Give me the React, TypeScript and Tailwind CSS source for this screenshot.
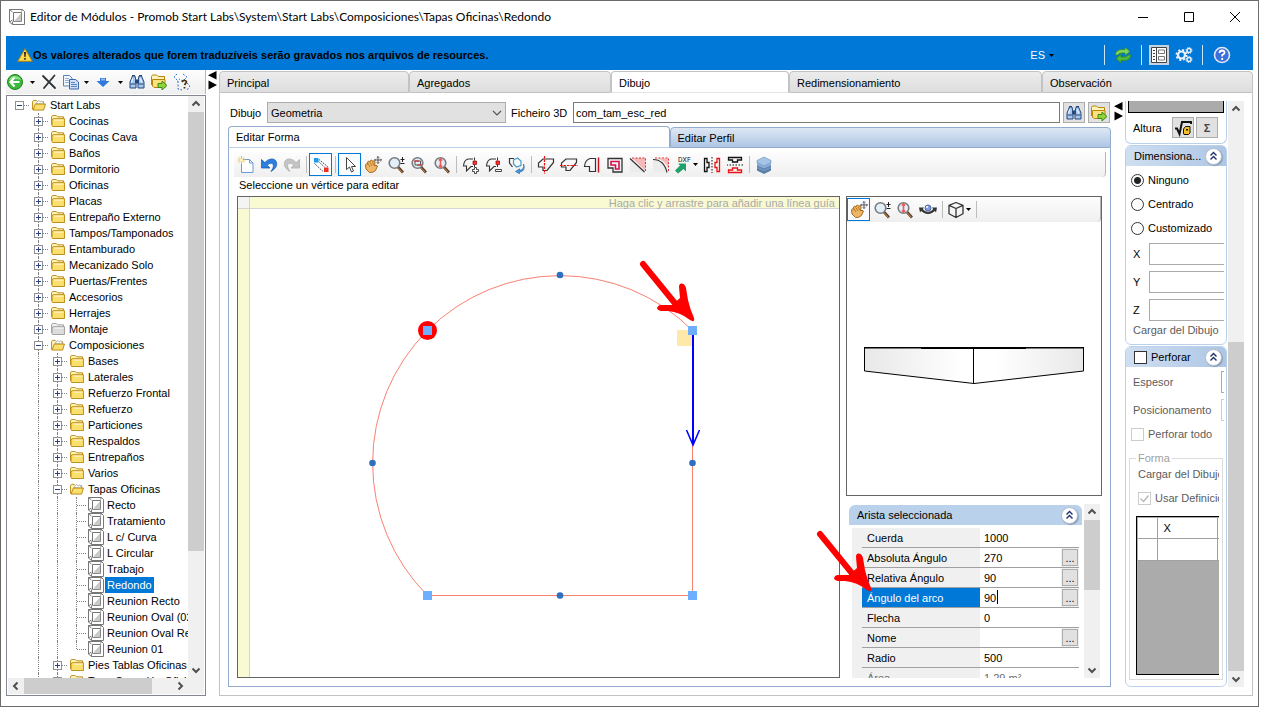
import { useState } from 'react';
import type { ReactNode } from 'react';
import clsx from 'clsx';

/* ---------- icons ---------- */

interface IconProps {
  size?: number;
  children: ReactNode;
}

function Icon({ size = 18, children }: IconProps) {
  return (
    <svg width={size} height={size} viewBox="0 0 18 18" fill="none" aria-hidden="true" className="shrink-0">
      {children}
    </svg>
  );
}

function Caret() {
  return (
    <svg width="5" height="3" viewBox="0 0 5 3" aria-hidden="true" className="shrink-0">
      <path d="M0 0h5L2.500 3z" fill="#000" />
    </svg>
  );
}

function ModuleIcon({ size = 16 }: { size?: number }) {
  return (
    <svg width={size} height={size} viewBox="0 0 16 16" fill="#fff" aria-hidden="true" className="shrink-0">
      <path d="M.5 .5h13l2 2v13h-12l-3-2.500z" stroke="#777" />
      <path d="M.5 .5l3 2.500M13.500 .5l-1 2M.5 13l3-2M3.500 15.500v-3" stroke="#777" />
      <path d="M4.500 3.500h8v9h-8z" stroke="#777" />
      <path d="M5 12.200L12.200 4v8.200z" fill="#c9c9c9" />
    </svg>
  );
}

function FolderIcon({ open, gray }: { open?: boolean; gray?: boolean }) {
  const edge = gray ? '#9a9a9a' : '#b8860b';
  const body = gray ? '#dcdcdc' : '#fbdf6e';
  return (
    <svg width="14" height="12" viewBox="0 0 15 13" fill="none" aria-hidden="true" className="shrink-0">
      {open ? (
        <>
          <path d="M.5 11.500V3l1-1.500h3L6 3h6.500v3" fill="#fff3b8" stroke={edge} />
          <path d="M4 5l3-3.500L9 3l1.500-1L13 5.500z" fill="#fff" stroke="#8fa6bd" strokeWidth=".8" />
          <path d="M1 12l2.500-6.500h11L12.500 12z" fill={body} stroke={edge} />
        </>
      ) : (
        <>
          <path d="M.5 10.500V2l1-1.500h4L7 2h6.500v2" fill={gray ? '#f2f2f2' : '#fff3b8'} stroke={edge} />
          <path d="M1.500 12.500l-.5-1V5l1.500-1h12v8.500z" fill={body} stroke={edge} />
          <path d="M3.500 5.500h10" stroke={gray ? '#fff' : '#fffbe0'} />
        </>
      )}
    </svg>
  );
}

function FolderGoIcon() {
  return (
    <Icon>
      <path d="M1.500 12V3.500L2.500 2h4L8 3.500h6.500V6" fill="#fff3b8" stroke="#b8860b" />
      <path d="M4 14.500L2.500 13V6.500h12.500v8z" fill="#fbe27d" stroke="#b8860b" />
      <path d="M8 10.500h4V8l5 4.500-5 4.500v-2.500H8z" fill="#8fd43c" stroke="#3f8a16" />
    </Icon>
  );
}

function BinocularsIcon() {
  return (
    <Icon>
      <path d="M2 15V9l2.500-6h2.500l1 5v7z" fill="#a9c6ec" stroke="#24497e" />
      <path d="M16 15V9l-2.500-6H11l-1 5v7z" fill="#a9c6ec" stroke="#24497e" />
      <path d="M7.500 7h3v3h-3zM4 2.500h3M11 2.500h3" fill="#24497e" stroke="#24497e" />
      <path d="M2.500 11h5M10.500 11h5" stroke="#24497e" />
      <path d="M3.500 9.500l1-4M12.500 5.500l1 4" stroke="#fff" />
    </Icon>
  );
}

function BackIcon() {
  return (
    <Icon>
      <circle cx="9" cy="9" r="7.500" fill="#3db83d" stroke="#1d861d" />
      <path d="M3 7a6.500 6.500 0 0112 0q-6-2-12 0" fill="#8be08b" />
      <path d="M8.500 4.500L4.500 9l4 4.500M5 9h8.500" stroke="#fff" strokeWidth="2.200" />
    </Icon>
  );
}

function DeleteIcon() {
  return (
    <Icon>
      <path d="M3 3l12 12M14.500 2.500L4 15" stroke="#2e3338" strokeWidth="1.800" strokeLinecap="round" />
    </Icon>
  );
}

function CopyIcon() {
  return (
    <Icon>
      <path d="M1.500 2.500h6l2.500 2.500v8H1.500z" fill="#f3f8ff" stroke="#5b83bd" />
      <path d="M3 5.500h4M3 7.500h4M3 9.500h4" stroke="#8fb1de" />
      <path d="M7.500 6.500h6L16.500 9v7h-9z" fill="#cfe0f8" stroke="#3c68ab" />
      <path d="M9 9.500h4M9 11.500h6M9 13.500h6" stroke="#5b83bd" />
    </Icon>
  );
}

function DownIcon() {
  return (
    <Icon>
      <path d="M6 5h6v3h3.500L9 14 2.500 8H6z" fill="#2f78dd" />
      <path d="M7 5.500h4v2H7z" fill="#8fbaf2" />
    </Icon>
  );
}

function SearchTreeIcon() {
  return (
    <Icon>
      <path d="M4 1l-3 3 4 4M10 1l4 3-4 4-4-2M5 8v8l4 1" stroke="#2d6fd6" strokeDasharray="2 1.500" />
      <path d="M9 9q1-2 3-1.500 2.500.8.500 3l-1 1.500M11.500 14v1.500" stroke="#4a3018" strokeWidth="1.800" />
      <path d="M14 10l3 3-3 4" stroke="#2d6fd6" strokeDasharray="2 1.500" />
    </Icon>
  );
}

function WarningIcon() {
  return (
    <svg width="16" height="14" viewBox="0 0 16 14" aria-hidden="true" className="shrink-0">
      <path d="M8 .7L15.300 13.300H.7z" fill="#ffd94d" stroke="#a98210" strokeLinejoin="round" />
      <path d="M7 4h2l-.4 5H7.400zM7.200 10h1.600v1.700H7.200z" fill="#222" />
    </svg>
  );
}

function RefreshIcon() {
  return (
    <Icon>
      <path d="M1 9q1-5.500 7-5.500h3V1l5 4.500-5 4V7H8q-3 0-4 2z" fill="#7fd35a" stroke="#2f8a26" strokeWidth=".8" />
      <path d="M17 9q-1 5.500-7 5.500H7V17l-5-4.500 5-4V11h3q3 0 4-2z" fill="#4fb83b" stroke="#2f8a26" strokeWidth=".8" />
    </Icon>
  );
}

function LayoutIcon() {
  return (
    <Icon>
      <path d="M1.500 1.500h15v15h-15z" fill="#fff" stroke="#444" />
      <path d="M6.500 2v14" stroke="#444" />
      <path d="M3 4.500h2M3 7.500h2M3 10.500h2M3 13.500h2" stroke="#444" />
      <path d="M8.500 4h6v3.500h-6zM8.500 10.500h6V14h-6z" stroke="#777" />
    </Icon>
  );
}

function GearsIcon() {
  return (
    <Icon>
      <circle cx="6.500" cy="9" r="3.500" stroke="#e8f1fb" strokeWidth="2.200" />
      <circle cx="6.500" cy="9" r="5" stroke="#e8f1fb" strokeWidth="2" strokeDasharray="2 1.930" />
      <circle cx="14" cy="4.500" r="2" stroke="#e8f1fb" strokeWidth="1.500" />
      <circle cx="14" cy="4.500" r="3" stroke="#e8f1fb" strokeWidth="1" strokeDasharray="1.200 1.156" />
      <circle cx="14" cy="13.500" r="2" stroke="#e8f1fb" strokeWidth="1.500" />
      <circle cx="14" cy="13.500" r="3" stroke="#e8f1fb" strokeWidth="1" strokeDasharray="1.200 1.156" />
    </Icon>
  );
}

function HelpIcon() {
  return (
    <Icon>
      <circle cx="9" cy="9" r="7.500" fill="#3f6fd8" stroke="#dfe8f8" strokeWidth="1.600" />
      <path d="M6.500 7q.2-2.500 2.700-2.500 2.500.2 2.300 2.300Q11.300 8 9.200 9v1.500M9.200 12v2" stroke="#fff" strokeWidth="1.800" />
    </Icon>
  );
}

function NewIcon() {
  return (
    <Icon>
      <path d="M4.500 3.500h8l3.500 3.500v9.500H4.500z" fill="#fff" stroke="#6b9bd8" />
      <path d="M12.500 3.500V7H16" stroke="#6b9bd8" />
      <path d="M4.500 0v8M.5 4h8M1.700 1.200l5.600 5.600M7.300 1.200L1.700 6.800" stroke="#e9c043" />
      <circle cx="4.500" cy="4" r="1.500" fill="#fff7cf" />
    </Icon>
  );
}

function UndoIcon({ muted }: { muted?: boolean }) {
  return (
    <svg
      width="18"
      height="18"
      viewBox="0 0 18 18"
      aria-hidden="true"
      className={clsx('shrink-0', muted && '-scale-x-100')}
    >
      <path
        d="M1.500 3.500v8.500h8.500L7.200 9.200Q10 6 12.500 7.500q2.500 2.500-1.500 8 6-3.500 5.700-8Q16 2.500 11 3 7.500 3.500 4.800 6.600z"
        fill={muted ? '#c4c4c4' : '#2c7fe0'}
        stroke={muted ? '#b0b0b0' : '#1a5fb8'}
        strokeWidth=".8"
      />
    </svg>
  );
}

function EdgeModeIcon() {
  return (
    <Icon>
      <path d="M7 3.500l9 7.500M6.500 5.500l6 5.500M2.500 7.500l8.500 8" stroke="#444" strokeDasharray="1.500 1" />
      <path d="M2 2h4.500v4.500H2z" fill="#189bf0" />
      <path d="M12 11.500h4.500V16H12z" fill="#f03020" />
    </Icon>
  );
}

function CursorIcon() {
  return (
    <Icon>
      <path d="M5.500 1.500v12l3-2.500 2 5 2-1-2-4.500h4z" fill="#fff" stroke="#444" />
    </Icon>
  );
}

function HandIcon() {
  return (
    <Icon>
      <path
        d="M1.500 8.500q1-1.500 2.500-.3L3.500 6q1-1.500 2.500 0l.5-1.500q1.500-1 2.300.5L10 5q1.500.5 1 2l-.5 3q1.500-1.500 3 0l-2 4.500Q9 17 5.500 16.500L2 13z"
        fill="#edb765"
        stroke="#a86a1c"
      />
      <path d="M4 8l2 3M6 6.500l2 3.500M8.500 6l1 3" stroke="#a86a1c" strokeWidth=".8" />
      <path d="M14 .5v7M10.500 4h7M12.800 1.700L14 .5l1.200 1.200M12.800 6.300L14 7.500l1.200-1.200M16.300 2.800L17.500 4l-1.200 1.200M11.700 2.800L10.500 4l1.200 1.200" stroke="#333" strokeWidth=".8" />
    </Icon>
  );
}

function MagnifierIcon({ mark }: { mark: 'plusminus' | 'fit' | 'one' }) {
  return (
    <Icon>
      <path d="M10.500 10.500l5.500 6" stroke="#5c3c22" strokeWidth="2.600" />
      <path d="M11 11.500l4.500 5" stroke="#c08a55" strokeWidth="1" />
      <circle cx="7.500" cy="7" r="5.300" fill="#e3eef6" stroke="#777c80" strokeWidth="1.600" />
      {mark === 'plusminus' && <path d="M15.500 1v5M13.500 3.500h4M13.500 7.500h4" stroke="#222" />}
      {mark === 'fit' && (
        <>
          <path d="M5 5h5.500v4H5z" stroke="#555" />
          <path d="M4 5h5M7 9h5" stroke="#d22" />
        </>
      )}
      {mark === 'one' && <path d="M7.500 3v8M5.800 4.500l1.700-1.700 1.700 1.700M5.800 9.500l1.700 1.700 1.700-1.700" stroke="#f05a5a" strokeWidth="1.600" />}
    </Icon>
  );
}

function VertexIcon({ sign }: { sign: 'plus' | 'minus' }) {
  return (
    <Icon>
      <path d="M11 3H6Q2 4 1.500 10h3v5L9 10.500h2" stroke="#333" strokeWidth="1.100" />
      <path d="M11 5h3.500v3.500H11z" fill="#f33" stroke="#800" strokeWidth=".7" />
      <path d="M12.500 1.500v3M12.500 9v2" stroke="#333" />
      {sign === 'plus' ? (
        <path d="M12.500 11.500h2v2h2v2h-2v2h-2v-2h-2v-2h2z" fill="#fff" stroke="#333" strokeWidth=".9" />
      ) : (
        <path d="M10.500 13.500h6v2h-6z" fill="#fff" stroke="#333" strokeWidth=".9" />
      )}
    </Icon>
  );
}

function ConvertIcon() {
  return (
    <Icon>
      <path d="M6 2.500H1.500V7l3 4" stroke="#333" strokeWidth="1.200" />
      <path d="M5.500 4l4-2 3.500 3v4.500L8.500 11 5.500 8z" fill="#f2f9ff" stroke="#4d9bc0" strokeWidth="1.200" />
      <path d="M15.500 8q1.500 5-4 6.500v-1.700L7.500 15.500l4 2.200v-1.500Q18 15 15.500 8z" fill="#4f97d8" stroke="#2a6cab" strokeWidth=".7" />
    </Icon>
  );
}

const SHAPE = 'M6 3h10.500v3.500L10 14.500H6V11H1.500V7z';

function CutVerticalIcon() {
  return (
    <Icon>
      <path d={SHAPE} stroke="#333" strokeWidth="1.200" />
      <path d="M7.500 0v18" stroke="#e11" strokeWidth="1.200" strokeDasharray="2.500 1" />
    </Icon>
  );
}

function CutHorizontalIcon() {
  return (
    <Icon>
      <path d={SHAPE} stroke="#333" strokeWidth="1.200" />
      <path d="M0 9.500h18" stroke="#e11" strokeWidth="1.200" strokeDasharray="2.500 1" />
    </Icon>
  );
}

function SideIcon() {
  return (
    <Icon>
      <path d="M12.500 2.500H7Q2 4 1.500 10.500h5v5h6z" stroke="#333" strokeWidth="1.200" />
      <path d="M15.500 1.500v15" stroke="#c12" strokeWidth="1.500" />
    </Icon>
  );
}

function OffsetIcon() {
  return (
    <Icon>
      <path d="M2 2.500h14v13.500H7v-4H2z" stroke="#333" strokeWidth="1.300" />
      <path d="M5 5.500h8v7.500H9.500V9H5z" stroke="#d4104c" strokeWidth="1.600" />
    </Icon>
  );
}

function ChamferIcon({ round }: { round?: boolean }) {
  const cut = round ? 'M1 3.500q11 0 14 13' : 'M1 2.500L15.500 16';
  return (
    <Icon>
      <path d={round ? 'M1 3.500q11 0 14 13L1 16.500z' : 'M1 2.500L15.500 16.500H1z'} fill="#ececec" />
      <path d={round ? 'M5 2.500h11.500V13Q13 4 5 2.500' : 'M3 2h13.500v13z'} fill="#f6b9b9" />
      <path d="M3 2h13.500v13" stroke="#d33" strokeDasharray="2 1.500" />
      <path d={cut} stroke="#333" strokeWidth="1.200" />
    </Icon>
  );
}

function DxfIcon() {
  return (
    <Icon>
      <path d="M1 14.500l5-5-2-2h8v8l-2.500-2.500-5.500 4.500z" fill="#21a06a" />
      <text x="4" y="6" fontSize="7" fontFamily="Roboto, sans-serif" fill="#222">
        DXF
      </text>
    </Icon>
  );
}

function MirrorIcon({ vertical }: { vertical?: boolean }) {
  return (
    <svg
      width="18"
      height="18"
      viewBox="0 0 18 18"
      fill="none"
      aria-hidden="true"
      className={clsx('shrink-0', vertical && 'rotate-90')}
    >
      <path d="M1.500 2.500h2.500v4h2v5H4v4H1.500z" stroke="#111" strokeWidth="1.300" />
      <path d="M16.500 2.500H14v4h-2v5h2v4h2.500z" stroke="#e11" strokeWidth="1.300" />
      <path d="M9 1v16" stroke="#111" strokeDasharray="1.500 1.500" />
    </svg>
  );
}

function LayersIcon() {
  return (
    <Icon>
      <path d="M2 12.500v2L9 18l7-3.500v-2L9 15.500z" fill="#5d7fa8" />
      <path d="M2 9.500v3.500L9 16l7-3v-3.500L9 12.500z" fill="#6f93bd" />
      <path d="M2 6.500v3.500L9 13l7-3V6.500L9 9.500z" fill="#8aaed8" />
      <path d="M2 10l7 3 7-3M2 13l7 3 7-3" stroke="#4d6f99" strokeWidth=".7" />
      <path d="M9 1l7 3.500v2L9 10 2 6.500v-2z" fill="#a5c4e6" stroke="#7397c2" strokeWidth=".7" />
    </Icon>
  );
}

function OrbitIcon() {
  return (
    <Icon>
      <path d="M2 8q7 8 14 0" stroke="#333" strokeWidth="2" />
      <path d="M0 6.500h5l-4 5zM18 6.500h-5l4 5z" fill="#333" />
      <circle cx="9" cy="7" r="3" fill="#7f9fdc" stroke="#4c69a8" />
      <circle cx="8" cy="6" r="1" fill="#fff" />
    </Icon>
  );
}

function CubeIcon() {
  return (
    <Icon>
      <path d="M9 1.500l7 2.800v8.500L9 16.500l-7-3.700V4.300zM2 4.300L9 7.500l7-3.200M9 7.500v9" stroke="#333" strokeWidth="1.300" strokeLinejoin="round" />
    </Icon>
  );
}

function FormulaIcon() {
  return (
    <Icon>
      <path d="M1 9.500h2L5.500 15 8 3h9v2" stroke="#111" strokeWidth="2" />
      <path d="M9.500 14v-4l2-2.500H16V14l-1.500 1.500H10z" fill="#f5c02c" stroke="#111" />
      <path d="M12 10h2v1.500h-2z" fill="#111" />
    </Icon>
  );
}

function CollapseButton({ label }: { label: string }) {
  return (
    <button
      type="button"
      aria-label={label}
      className="flex size-[17px] shrink-0 items-center justify-center rounded-full border border-[#b4bdca] bg-white shadow-[1px_1px_1px_#8b9bb4]"
    >
      <svg width="9" height="10" viewBox="0 0 9 10" fill="none" aria-hidden="true">
        <path d="M1.500 4.500l3-3 3 3M1.500 8.500l3-3 3 3" stroke="#1c2f6b" strokeWidth="1.400" />
      </svg>
    </button>
  );
}

/* red hand-drawn pointer laid over the window */
function PointerArrow() {
  return (
    <>
      <path d="M4 4l35 43" stroke="#f00" strokeWidth="6" strokeLinecap="round" fill="none" />
      <path
        d="M40 27Q40 23 43 23.500 46 24 47 28L49 40Q51 49 55 58 56 63 51 60 41 52 29 51L22 51Q18 50 18 48 19 45 22 45L33 45 41 38z"
        fill="#f00"
      />
    </>
  );
}

/* ---------- shared pieces ---------- */

interface ToolButtonProps {
  label: string;
  active?: boolean;
  caret?: boolean;
  children: ReactNode;
}

function ToolButton({ label, active, caret, children }: ToolButtonProps) {
  return (
    <button
      type="button"
      aria-label={label}
      aria-pressed={active}
      className={clsx(
        'flex h-[23px] shrink-0 items-center justify-center gap-px border',
        caret ? 'w-7' : 'w-[23px]',
        active ? 'border-[#0078d7] bg-[#fafcff]' : 'border-transparent',
      )}
    >
      {children}
      {caret && <Caret />}
    </button>
  );
}

function Separator() {
  return <span className="ml-[3px] mr-0.5 h-[17px] w-px shrink-0 bg-[#bdbdbd]" />;
}

function Chevron({ dir }: { dir: 'up' | 'down' | 'left' | 'right' }) {
  const paths = {
    up: 'M1.500 6.500l3.500-3.500 3.500 3.500',
    down: 'M1.500 3.500L5 7l3.500-3.500',
    left: 'M6.500 1.500L3 5l3.500 3.500',
    right: 'M3.500 1.500L7 5l-3.500 3.500',
  };
  return (
    <svg width="10" height="10" viewBox="0 0 10 10" fill="none" aria-hidden="true">
      <path d={paths[dir]} stroke="#505050" strokeWidth="2" />
    </svg>
  );
}

interface ScrollbarProps {
  before: number;
  thumb: number;
  after: number;
  horizontal?: boolean;
}

function Scrollbar({ before, thumb, after, horizontal }: ScrollbarProps) {
  const arrow = 'flex size-4 shrink-0 items-center justify-center';
  return (
    <div className={clsx('flex bg-[#f0f0f0]', horizontal ? 'h-4 min-w-0 flex-1' : 'w-4 shrink-0 flex-col')}>
      <button type="button" aria-label={horizontal ? 'Izquierda' : 'Arriba'} className={arrow}>
        <Chevron dir={horizontal ? 'left' : 'up'} />
      </button>
      <div className="basis-0" style={{ flexGrow: before }} />
      <div className="basis-0 bg-[#cdcdcd]" style={{ flexGrow: thumb }} />
      <div className="basis-0" style={{ flexGrow: after }} />
      <button type="button" aria-label={horizontal ? 'Derecha' : 'Abajo'} className={arrow}>
        <Chevron dir={horizontal ? 'right' : 'down'} />
      </button>
    </div>
  );
}

function Splitter() {
  return (
    <button type="button" aria-label="Mostrar u ocultar panel" className="flex w-full justify-center pt-px">
      <svg width="9" height="19" viewBox="0 0 9 19" aria-hidden="true">
        <path d="M8.500 0v8.500L0 4.250zM.5 9.500v9L9 14z" fill="#000" />
      </svg>
    </button>
  );
}

/* ---------- module tree ---------- */

interface TreeNode {
  label: string;
  depth: number;
  kind?: 'open' | 'gray' | 'module';
  selected?: boolean;
  last?: boolean;
}

const TREE: TreeNode[] = [
  { label: 'Start Labs', depth: 0, kind: 'open' },
  { label: 'Cocinas', depth: 1 },
  { label: 'Cocinas Cava', depth: 1 },
  { label: 'Baños', depth: 1 },
  { label: 'Dormitorio', depth: 1 },
  { label: 'Oficinas', depth: 1 },
  { label: 'Placas', depth: 1 },
  { label: 'Entrepaño Externo', depth: 1 },
  { label: 'Tampos/Tamponados', depth: 1 },
  { label: 'Entamburado', depth: 1 },
  { label: 'Mecanizado Solo', depth: 1 },
  { label: 'Puertas/Frentes', depth: 1 },
  { label: 'Accesorios', depth: 1 },
  { label: 'Herrajes', depth: 1 },
  { label: 'Montaje', depth: 1, kind: 'gray' },
  { label: 'Composiciones', depth: 1, kind: 'open' },
  { label: 'Bases', depth: 2 },
  { label: 'Laterales', depth: 2 },
  { label: 'Refuerzo Frontal', depth: 2 },
  { label: 'Refuerzo', depth: 2 },
  { label: 'Particiones', depth: 2 },
  { label: 'Respaldos', depth: 2 },
  { label: 'Entrepaños', depth: 2 },
  { label: 'Varios', depth: 2 },
  { label: 'Tapas Oficinas', depth: 2, kind: 'open' },
  { label: 'Recto', depth: 3, kind: 'module' },
  { label: 'Tratamiento', depth: 3, kind: 'module' },
  { label: 'L c/ Curva', depth: 3, kind: 'module' },
  { label: 'L Circular', depth: 3, kind: 'module' },
  { label: 'Trabajo', depth: 3, kind: 'module' },
  { label: 'Redondo', depth: 3, kind: 'module', selected: true },
  { label: 'Reunion Recto', depth: 3, kind: 'module' },
  { label: 'Reunion Oval (02)', depth: 3, kind: 'module' },
  { label: 'Reunion Oval Recto', depth: 3, kind: 'module' },
  { label: 'Reunion 01', depth: 3, kind: 'module', last: true },
  { label: 'Pies Tablas Oficinas', depth: 2 },
  { label: 'Tapa Conexión Oficina', depth: 2 },
];

function TreeRow({ node }: { node: TreeNode }) {
  const isModule = node.kind === 'module';
  return (
    <li className="flex h-4 items-center">
      {Array.from({ length: node.depth }, (_, level) => (
        <span key={level} className="flex h-4 w-[19px] shrink-0 justify-center">
          {level > 0 && <span className="border-l border-dotted border-[#808080]" />}
        </span>
      ))}
      <span className="grid h-4 w-[19px] shrink-0 grid-cols-2 items-center">
        <span
          className={clsx(
            'col-start-1 row-start-1 border-r border-dotted border-[#808080]',
            node.depth === 0 && 'invisible',
            node.last ? 'h-2 self-start' : 'h-4',
          )}
        />
        <span className="col-start-2 row-start-1 border-t border-dotted border-[#808080]" />
        {!isModule && (
          <span className="z-10 col-span-2 col-start-1 row-start-1 flex size-[9px] items-center justify-center justify-self-center border border-[#919191] bg-white">
            <svg width="5" height="5" viewBox="0 0 5 5" aria-hidden="true">
              <path d={node.kind === 'open' ? 'M0 2.500h5' : 'M0 2.500h5M2.500 0v5'} stroke="#26408b" />
            </svg>
          </span>
        )}
      </span>
      <span className="flex w-[19px] shrink-0 justify-center">
        {isModule ? <ModuleIcon /> : <FolderIcon open={node.kind === 'open'} gray={node.kind === 'gray'} />}
      </span>
      <span className={clsx('px-0.5 leading-4 whitespace-nowrap', node.selected && 'bg-[#0078d7] text-white')}>
        {node.label}
      </span>
    </li>
  );
}

function TreePanel() {
  return (
    <aside className="flex w-[200px] shrink-0 flex-col">
      <div className="flex h-6 shrink-0 items-center justify-between border-r border-[#b5b5b5] bg-linear-to-b from-[#fdfdfd] to-[#efefef] pr-3.5">
        <button type="button" aria-label="Volver" className="flex items-center gap-1.5"><BackIcon /><Caret /></button>
        <button type="button" aria-label="Eliminar"><DeleteIcon /></button>
        <button type="button" aria-label="Copiar" className="flex items-center gap-1"><CopyIcon /><Caret /></button>
        <button type="button" aria-label="Mover" className="flex items-center gap-1.5"><DownIcon /><Caret /></button>
        <button type="button" aria-label="Buscar"><BinocularsIcon /></button>
        <button type="button" aria-label="Abrir carpeta"><FolderGoIcon /></button>
        <button type="button" aria-label="Buscar en el árbol"><SearchTreeIcon /></button>
      </div>
      <div className="mt-px flex min-h-0 flex-1 flex-col border border-[#828790] p-px pt-0">
        <div className="flex min-h-0 flex-1">
          <ul className="min-h-0 min-w-0 flex-1 overflow-hidden pt-px pl-0.5">
            {TREE.map((node) => (
              <TreeRow key={node.label} node={node} />
            ))}
          </ul>
          <Scrollbar before={0} thumb={436} after={110} />
        </div>
        <div className="flex shrink-0">
          <Scrollbar horizontal before={0} thumb={125} after={20} />
          <span className="w-4 shrink-0 bg-[#f0f0f0]" />
        </div>
      </div>
    </aside>
  );
}

/* ---------- drawing ---------- */

function ShapeCanvas() {
  return (
    <div className="grid min-w-0 flex-1 grid-cols-[12px_1fr] grid-rows-[12px_1fr] overflow-hidden border border-[#646464] bg-white">
      <div className="border-r border-b border-[#d4d4d4] bg-[#f4f4f4]" />
      <div className="border-b border-[#d4d4d4] bg-[#fafad2] pr-1 text-right leading-3 text-[#a9a9a9]">
        Haga clic y arrastre para añadir una línea guía
      </div>
      <div className="border-r border-[#d4d4d4] bg-[#fafad2]" />
      <svg viewBox="0 0 589 468" className="size-full min-h-0" fill="none" role="img" aria-label="Forma">
        <path d="M427 121h16v16h-16z" fill="#ffe9a8" />
        <path
          d="M442.500 121.500A187.400 187.400 0 0 0 177.500 121.500A187.400 187.400 0 0 0 177.500 386.500H442.500z"
          stroke="#fa8072"
        />
        <circle cx="177.500" cy="121.500" r="9.500" fill="#f00" />
        {[[310, 66], [122.500, 254], [442.500, 254], [310, 386.500]].map(([cx, cy]) => (
          <circle key={`${cx}-${cy}`} cx={cx} cy={cy} r="3.300" fill="#2f6fc0" />
        ))}
        <path d="M443 125v110" stroke="#00f" strokeWidth="2" />
        <path d="M436.500 221l6.500 15 6.500-15" stroke="#00f" strokeWidth="1.500" />
        {[[173, 117], [438, 117], [438, 382], [173, 382]].map(([x, y]) => (
          <rect key={`${x}-${y}`} x={x} y={y} width="9" height="9" fill="#6eaeff" />
        ))}
        <g transform="translate(389 51)">
          <PointerArrow />
        </g>
      </svg>
    </div>
  );
}

function Preview3D() {
  return (
    <div className="flex h-[300px] shrink-0 flex-col border border-[#646464] bg-white">
      <div className="flex h-[25px] shrink-0 items-center rounded-br border-r border-[#b5b5b5] bg-linear-to-b from-[#fdfdfd] to-[#efefef]">
        <ToolButton label="Mover vista" active><HandIcon /></ToolButton>
        <ToolButton label="Zoom"><MagnifierIcon mark="plusminus" /></ToolButton>
        <ToolButton label="Zoom real"><MagnifierIcon mark="one" /></ToolButton>
        <ToolButton label="Orbitar"><OrbitIcon /></ToolButton>
        <Separator />
        <ToolButton label="Vista" caret><CubeIcon /></ToolButton>
        <Separator />
      </div>
      <svg viewBox="0 0 254 273" className="min-h-0 w-full flex-1" fill="none" role="img" aria-label="Vista 3D">
        <defs>
          <linearGradient id="slab">
            <stop offset="0" stopColor="#e8e8e8" />
            <stop offset=".45" stopColor="#fff" />
            <stop offset=".6" stopColor="#fff" />
            <stop offset="1" stopColor="#e8e8e8" />
          </linearGradient>
        </defs>
        <path d="M17.500 126h219v23L127 161.500 17.500 149z" fill="url(#slab)" stroke="#000" />
        <path d="M17 125.500h220M126.500 126v35" stroke="#000" />
        <path d="M74 126h105" stroke="#000" strokeWidth="2" />
      </svg>
    </div>
  );
}

interface Property {
  id: string;
  label: string;
  value: string;
  picker?: boolean;
  selected?: boolean;
  readOnly?: boolean;
}

const PROPERTIES: Property[] = [
  { id: 'cuerda', label: 'Cuerda', value: '1000' },
  { id: 'absoluta', label: 'Absoluta Ángulo', value: '270', picker: true },
  { id: 'relativa', label: 'Relativa Ángulo', value: '90', picker: true },
  { id: 'arco', label: 'Ángulo del arco', value: '90', picker: true, selected: true },
  { id: 'flecha', label: 'Flecha', value: '0' },
  { id: 'nome', label: 'Nome', value: '', picker: true },
  { id: 'radio', label: 'Radio', value: '500' },
  { id: 'area', label: 'Área', value: '1,29 m²', readOnly: true },
];

function PropertyRow({ property }: { property: Property }) {
  const [value, setValue] = useState(property.value);
  return (
    <div className="relative flex h-5 items-stretch border-b border-[#a0a0a0]">
      <label
        htmlFor={property.id}
        className={clsx(
          'flex w-[118px] shrink-0 items-center pl-[5px]',
          property.selected ? 'bg-[#0078d7] text-white' : 'bg-[#f0f0f0]',
          property.readOnly && 'text-[#6d6d6d]',
        )}
      >
        {property.label}
      </label>
      <input
        id={property.id}
        value={value}
        readOnly={property.readOnly}
        onChange={(event) => setValue(event.target.value)}
        className={clsx('min-w-0 flex-1 bg-white pl-1 outline-none', property.readOnly && 'text-[#6d6d6d]')}
      />
      {property.selected && <span className="absolute top-0.5 left-[135px] h-3.5 w-px bg-black" />}
      {property.picker && (
        <button
          type="button"
          aria-label={`Editar ${property.label}`}
          className="m-px flex w-4 items-center justify-center border border-[#adadad] bg-[#e1e1e1] leading-3"
        >
          ...
        </button>
      )}
    </div>
  );
}

function PropertiesPanel() {
  return (
    <section className="relative flex min-h-0 flex-1 gap-0.5 pr-0.5 pl-[3px]">
      <div className="flex min-w-0 flex-1 flex-col overflow-hidden">
        <header className="mt-px flex h-5 shrink-0 items-center justify-between rounded-t-md bg-[#b9d1ea] pr-1 pl-2">
          <h2>Arista seleccionada</h2>
          <CollapseButton label="Contraer arista seleccionada" />
        </header>
        <div className="mx-[3px] mt-[3px] bg-[#f0f0f0] pl-2.5">
          {PROPERTIES.map((property) => (
            <PropertyRow key={property.id} property={property} />
          ))}
        </div>
      </div>
      <Scrollbar before={0} thumb={70} after={72} />
      <svg
        width="60"
        height="64"
        viewBox="0 0 60 64"
        aria-hidden="true"
        className="pointer-events-none absolute top-[26px] -left-[30px] z-20"
      >
        <PointerArrow />
      </svg>
    </section>
  );
}

function FormToolbar() {
  return (
    <div
      role="toolbar"
      className="mr-1 ml-[5px] flex h-[25px] shrink-0 items-center rounded-br border-r border-[#b5b5b5] bg-linear-to-b from-[#fdfdfd] to-[#efefef]"
    >
      <ToolButton label="Nuevo"><NewIcon /></ToolButton>
      <ToolButton label="Deshacer"><UndoIcon /></ToolButton>
      <ToolButton label="Rehacer"><UndoIcon muted /></ToolButton>
      <Separator />
      <ToolButton label="Editar aristas" active><EdgeModeIcon /></ToolButton>
      <Separator />
      <ToolButton label="Seleccionar" active><CursorIcon /></ToolButton>
      <ToolButton label="Mover"><HandIcon /></ToolButton>
      <ToolButton label="Zoom"><MagnifierIcon mark="plusminus" /></ToolButton>
      <ToolButton label="Zoom ventana"><MagnifierIcon mark="fit" /></ToolButton>
      <ToolButton label="Zoom real"><MagnifierIcon mark="one" /></ToolButton>
      <Separator />
      <ToolButton label="Añadir vértice"><VertexIcon sign="plus" /></ToolButton>
      <ToolButton label="Quitar vértice"><VertexIcon sign="minus" /></ToolButton>
      <ToolButton label="Convertir forma"><ConvertIcon /></ToolButton>
      <Separator />
      <ToolButton label="Corte vertical"><CutVerticalIcon /></ToolButton>
      <ToolButton label="Corte horizontal"><CutHorizontalIcon /></ToolButton>
      <ToolButton label="Lado"><SideIcon /></ToolButton>
      <ToolButton label="Desplazar contorno"><OffsetIcon /></ToolButton>
      <ToolButton label="Chaflán"><ChamferIcon /></ToolButton>
      <ToolButton label="Redondeo"><ChamferIcon round /></ToolButton>
      <ToolButton label="Importar" caret><DxfIcon /></ToolButton>
      <ToolButton label="Reflejar horizontal"><MirrorIcon /></ToolButton>
      <ToolButton label="Reflejar vertical"><MirrorIcon vertical /></ToolButton>
      <Separator />
      <ToolButton label="Capas"><LayersIcon /></ToolButton>
    </div>
  );
}

function DrawingEditor() {
  return (
    <div className="flex min-w-0 flex-1 flex-col pt-px">
      <div className="flex h-[21px] shrink-0 items-stretch">
        <label htmlFor="dibujo" className="flex w-[39px] shrink-0 items-center pl-0.5">Dibujo</label>
        <div className="relative flex w-[239px] shrink-0">
          <select
            id="dibujo"
            className="w-full appearance-none border border-[#adadad] bg-[#e1e1e1] px-[3px] outline-none"
          >
            <option>Geometria</option>
          </select>
          <svg
            width="10"
            height="6"
            viewBox="0 0 10 6"
            fill="none"
            aria-hidden="true"
            className="pointer-events-none absolute top-2 right-1"
          >
            <path d="M1 1l4 4 4-4" stroke="#555" strokeWidth="1.200" />
          </svg>
        </div>
        <label htmlFor="fichero" className="flex w-[67px] shrink-0 items-center pl-[5px]">Ficheiro 3D</label>
        <input
          id="fichero"
          defaultValue="com_tam_esc_red"
          className="min-w-0 flex-1 border border-[#7a7a7a] bg-white px-0.5 outline-none"
        />
        <button type="button" aria-label="Buscar archivo" className="ml-[3px] flex w-[22px] items-center justify-center border border-[#adadad] bg-[#e1e1e1]">
          <BinocularsIcon />
        </button>
        <button type="button" aria-label="Abrir archivo" className="mr-px ml-[3px] flex w-[22px] items-center justify-center border border-[#adadad] bg-[#e1e1e1]">
          <FolderGoIcon />
        </button>
      </div>

      <div className="mt-[3px] flex h-[22px] shrink-0">
        <button type="button" className="w-1/2 rounded-t border border-b-[#b9d1ea] border-[#93abcf] bg-white px-[7px] text-left">
          Editar Forma
        </button>
        <button type="button" className="mt-px w-1/2 rounded-t border border-[#93abcf] bg-linear-to-b from-[#dfe8f4] to-[#adc6e5] px-[7px] text-left">
          Editar Perfil
        </button>
      </div>
      <div className="flex min-h-0 flex-1 flex-col border border-t-0 border-[#93abcf] pt-1">
        <FormToolbar />
        <p className="shrink-0 px-2.5 pb-[3px] leading-4">Seleccione un vértice para editar</p>
        <div className="flex min-h-0 flex-1 gap-1.5 px-2 pb-2">
          <ShapeCanvas />
          <div className="flex w-64 shrink-0 flex-col gap-2">
            <Preview3D />
            <PropertiesPanel />
          </div>
        </div>
      </div>
    </div>
  );
}

/* ---------- right sidebar ---------- */

const RADIO =
  'size-[13px] shrink-0 appearance-none rounded-full border border-[#333] bg-white checked:bg-[radial-gradient(circle,#222_0_3px,#fff_4px)]';
const SMALL_BUTTON = 'flex h-[21px] w-[22px] items-center justify-center border border-[#adadad] bg-[#e1e1e1]';

function DimensionSection() {
  const [mode, setMode] = useState('Ninguno');
  return (
    <section className="mt-px shrink-0 rounded-md border border-[#b9d1ea]">
      <header className="flex h-5 items-center justify-between rounded-t bg-linear-to-r from-[#cfdff1] to-[#adc6e5] pr-1 pl-2">
        <h2>Dimensiona...</h2>
        <CollapseButton label="Contraer dimensionamiento" />
      </header>
      <div className="flex flex-col gap-2.5 pt-[7px] pl-[5px]">
        {['Ninguno', 'Centrado', 'Customizado'].map((option) => (
          <label key={option} className="flex h-3.5 items-center gap-1">
            <input
              type="radio"
              name="dimension"
              checked={mode === option}
              onChange={() => setMode(option)}
              className={RADIO}
            />
            {option}
          </label>
        ))}
      </div>
      <div className="mt-2 mr-0.5 flex flex-col gap-1.5 overflow-hidden pl-[7px]">
        {['X', 'Y', 'Z'].map((axis) => (
          <label key={axis} className="flex h-[22px] items-center">
            <span className="w-4 shrink-0">{axis}</span>
            <input className="h-full min-w-0 flex-1 border border-r-0 border-[#ababab] bg-white px-1 outline-none" />
          </label>
        ))}
      </div>
      <p className="h-[23px] overflow-hidden pt-px pl-[7px] leading-4 whitespace-nowrap text-[#5c5c5c]">Cargar del Dibujo</p>
    </section>
  );
}

function DrillSection() {
  return (
    <section className="mt-px flex min-h-0 flex-1 flex-col overflow-hidden rounded-md border border-[#b9d1ea] text-[#5c5c5c]">
      <header className="flex h-5 shrink-0 items-center justify-between bg-linear-to-r from-[#cfdff1] to-[#adc6e5] pr-1 pl-2 text-black">
        <label className="flex items-center gap-1">
          <input type="checkbox" className="size-[13px] appearance-none border border-[#333] bg-white" />
          Perforar
        </label>
        <CollapseButton label="Contraer perforar" />
      </header>
      <div className="mt-1 mr-0.5 flex flex-col gap-1.5">
        <label className="flex h-[22px] items-center justify-between pl-[7px]">
          Espesor
          <input className="h-full w-[3px] border border-r-0 border-[#ababab] bg-white" />
        </label>
        <label className="flex h-[22px] items-center justify-between pl-[7px]">
          Posicionamento
          <input disabled className="h-full w-[3px] border border-r-0 border-[#ccc] bg-white" />
        </label>
      </div>
      <label className="mt-[5px] flex h-4 items-center gap-1 pl-[5px] whitespace-nowrap">
        <input type="checkbox" disabled className="size-[13px] appearance-none border border-[#ccc] bg-white" />
        Perforar todo
      </label>
      <fieldset className="mx-[3px] mt-2 mb-1.5 flex min-h-0 min-w-0 flex-1 flex-col border border-[#dcdcdc] pr-[3px]">
        <legend className="ml-1.5 px-0.5 leading-4 text-[#a0a0a0]">Forma</legend>
        <p className="overflow-hidden pl-2 leading-4 whitespace-nowrap">Cargar del Dibujo</p>
        <label className="mt-2 flex h-4 items-center gap-1 overflow-hidden pl-2 whitespace-nowrap">
          <span className="relative flex shrink-0">
            <input type="checkbox" disabled defaultChecked className="size-[13px] appearance-none border border-[#ccc] bg-white" />
            <svg width="13" height="13" viewBox="0 0 13 13" fill="none" aria-hidden="true" className="absolute inset-0">
              <path d="M2.500 6.500l3 3 5-6" stroke="#b5b5b5" strokeWidth="1.300" />
            </svg>
          </span>
          Usar Definición
        </label>
        <div className="mt-2.5 mb-1 ml-1.5 min-h-0 flex-1 border border-r-0 border-black bg-[#ababab] p-px pr-0">
          <table className="w-full table-fixed border-collapse bg-white text-black">
            <thead>
              <tr className="h-5">
                <th className="w-[19px] border-r border-b border-[#a0a0a0]" />
                <th className="border-r border-b border-[#a0a0a0] pl-1.5 text-left font-normal">X</th>
                <th className="w-0.5 border-b border-[#a0a0a0]" />
              </tr>
            </thead>
            <tbody>
              <tr className="h-[22px]">
                <td className="border-r border-b border-[#a0a0a0]" />
                <td className="border-r border-b border-[#a0a0a0]" />
                <td className="border-b border-[#a0a0a0]" />
              </tr>
            </tbody>
          </table>
        </div>
      </fieldset>
    </section>
  );
}

function Sidebar() {
  return (
    <aside className="flex w-[119px] shrink-0 gap-px">
      <div className="flex min-h-0 w-[102px] shrink-0 flex-col overflow-hidden">
        <section className="h-[43px] shrink-0 rounded-b-md border border-t-0 border-[#b9d1ea] px-0.5">
          <div className="h-3 border border-t-0 border-black bg-[#ababab]" />
          <div className="mt-1 flex items-center gap-0.5 pl-[5px]">
            <span className="w-[37px]">Altura</span>
            <button type="button" aria-label="Fórmula" className={SMALL_BUTTON}><FormulaIcon /></button>
            <button type="button" className={clsx(SMALL_BUTTON, 'font-bold text-[#444]')}>Σ</button>
          </div>
        </section>
        <DimensionSection />
        <DrillSection />
      </div>
      <Scrollbar before={225} thumb={329} after={0} />
    </aside>
  );
}

/* ---------- window ---------- */

const TABS = [
  { label: 'Principal', grow: 174 },
  { label: 'Agregados', grow: 186 },
  { label: 'Dibujo', grow: 162 },
  { label: 'Redimensionamiento', grow: 237 },
  { label: 'Observación', grow: 195 },
];

function TitleBar() {
  return (
    <header className="flex h-[35px] shrink-0 items-center bg-white pb-1 pl-2 font-[Lato,sans-serif] text-[12px]">
      <ModuleIcon />
      <h1 className="ml-[5px] flex-1">
        Editor de Módulos - Promob Start Labs\System\Start Labs\Composiciones\Tapas Oficinas\Redondo
      </h1>
      {[
        ['Minimizar', 'M0 5.500h10'],
        ['Maximizar', 'M.5 .5h9v9h-9z'],
        ['Cerrar', 'M0 0l10 10M10 0L0 10'],
      ].map(([label, d]) => (
        <button key={label} type="button" aria-label={label} className="flex w-[46px] justify-center">
          <svg width="10" height="10" viewBox="0 0 10 10" fill="none" aria-hidden="true">
            <path d={d} stroke="#000" />
          </svg>
        </button>
      ))}
    </header>
  );
}

function MessageBar() {
  return (
    <div className="mx-[5px] flex h-[34px] shrink-0 items-center bg-[#0078d7] pt-1 pr-[22px] pl-[11px]">
      <WarningIcon />
      <p className="flex-1 font-bold">
        Os valores alterados que forem traduzíveis serão gravados nos arquivos de resources.
      </p>
      <button type="button" className="mr-[50px] flex items-center gap-1 text-white">
        ES <Caret />
      </button>
      <span className="h-5 w-px bg-white/80" />
      <button type="button" aria-label="Actualizar" className="mx-[9px]"><RefreshIcon /></button>
      <span className="h-5 w-px bg-white/80" />
      <button type="button" aria-label="Diseño" className="ml-[7px] flex size-5 items-center justify-center bg-[#c6d3e3]">
        <LayoutIcon />
      </button>
      <button type="button" aria-label="Configuración" className="ml-[6px]"><GearsIcon /></button>
      <span className="ml-[9px] h-5 w-px bg-white/80" />
      <button type="button" aria-label="Ayuda" className="ml-[10px]"><HelpIcon /></button>
    </div>
  );
}

export default function App() {
  return (
    <div className="h-screen min-h-[640px] bg-white pr-[11px] pb-[7px] font-['Liberation_Sans',Arial,sans-serif] text-[11px] leading-4 text-black">
      <main className="flex h-full flex-col border border-[#6b6b6b] bg-white">
        <TitleBar />
        <MessageBar />
        <div className="flex min-h-0 flex-1 px-[5px] pb-2.5">
          <TreePanel />
          <div className="w-[13px] shrink-0">
            <Splitter />
          </div>
          <div className="flex min-w-0 flex-1 flex-col">
            <nav className="flex h-[23px] shrink-0 pt-px">
              {TABS.map((tab) => (
                <button
                  key={tab.label}
                  type="button"
                  style={{ flexGrow: tab.grow }}
                  className={clsx(
                    'basis-0 rounded-t border border-[#c3c3c3] px-[7px] pt-px text-left',
                    tab.label === 'Dibujo' ? 'border-b-[#e5e5e5] bg-white' : 'bg-linear-to-b from-[#ececec] to-[#dedede]',
                  )}
                >
                  {tab.label}
                </button>
              ))}
            </nav>
            <div className="flex min-h-0 flex-1 border border-t-0 border-[#c3c3c3] p-2">
              <DrawingEditor />
              <div className="w-3.5 shrink-0">
                <Splitter />
              </div>
              <Sidebar />
            </div>
          </div>
        </div>
      </main>
    </div>
  );
}
